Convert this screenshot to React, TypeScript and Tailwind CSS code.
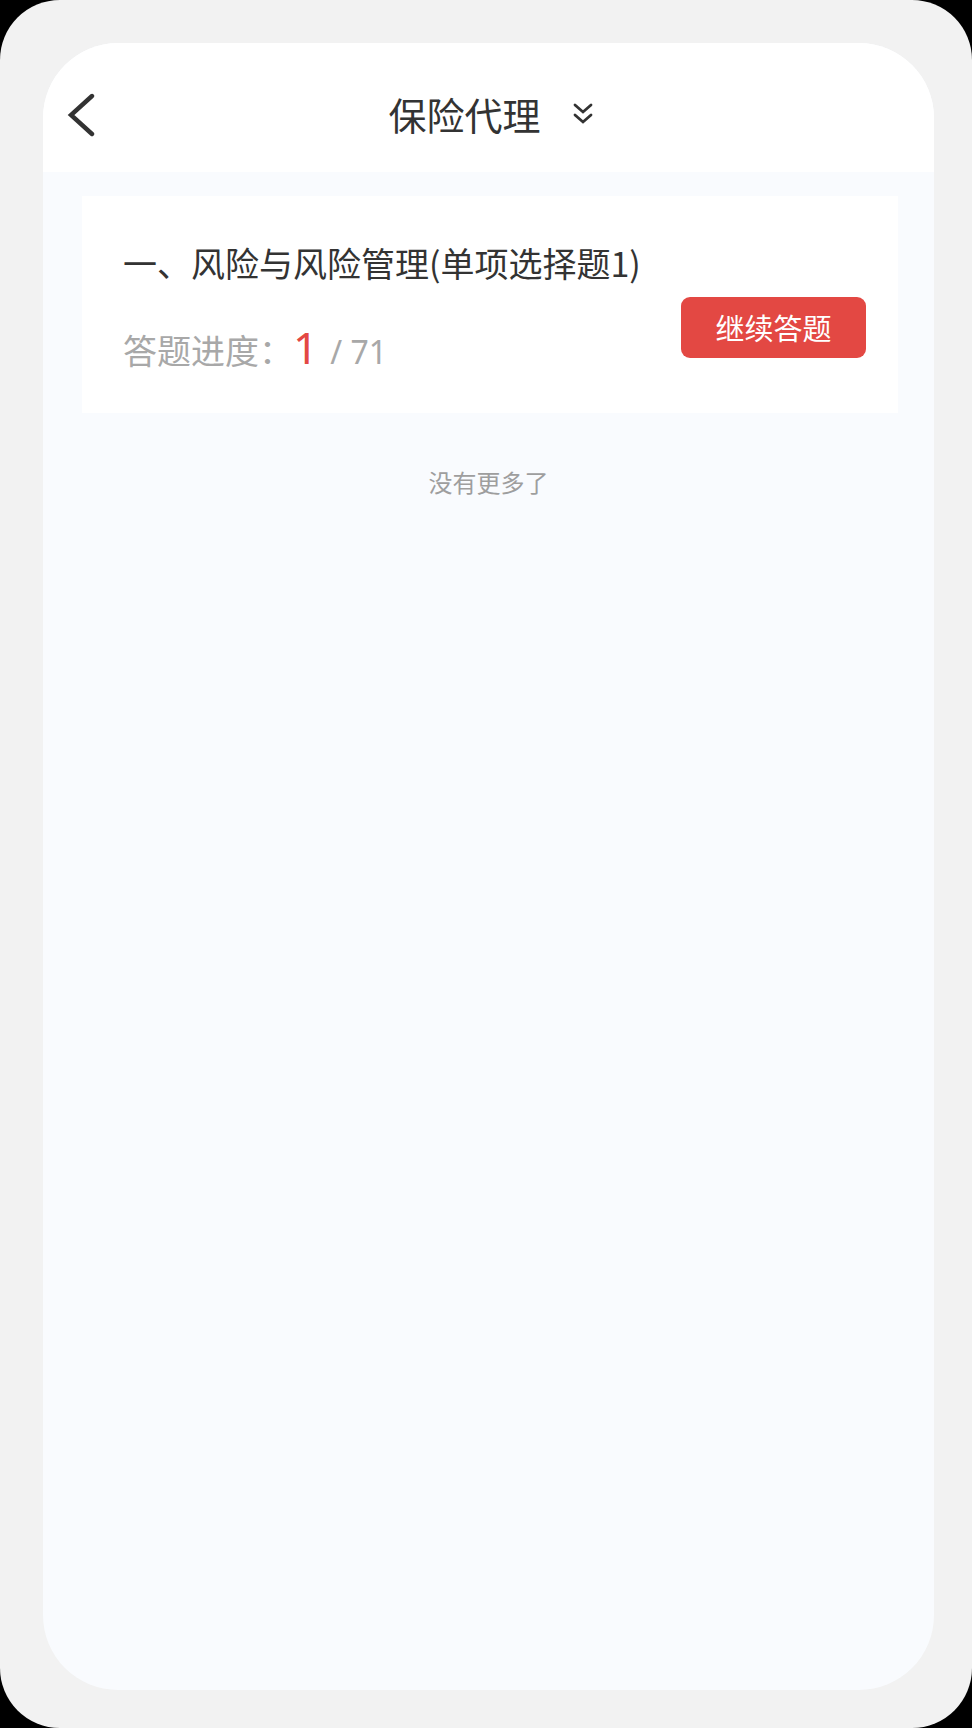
export default function App() {
  return (
    <div className="w-[972px] h-[1728px] bg-black" style={{ fontFamily: '"Noto Sans CJK SC", "Noto Sans", sans-serif' }}>
      <div className="h-full bg-[#f2f2f2] rounded-[60px] pl-[43px] pr-[38px] pt-[43px] pb-[38px]">
        <div className="h-full rounded-[75px] overflow-hidden bg-[#f9fbfe] flex flex-col">
          {/* header */}
          <div className="relative h-[129px] shrink-0 bg-white flex items-center justify-center pt-[12px]">
            <svg className="absolute left-[24px] top-[50px]" width="28" height="44" viewBox="0 0 28 44" fill="none">
              <path d="M25 3 L4 22 L25 41" stroke="#333333" strokeWidth="4.4" strokeLinecap="round" strokeLinejoin="miter" />
            </svg>
            <div className="flex items-center ml-[4px]">
              <span className="text-[38px] leading-[46px] text-[#333333]">保险代理</span>
              <svg className="ml-[32px] mt-[2px]" width="20" height="24" viewBox="0 0 20 24" fill="none">
                <path d="M2 2 L10 9 L18 2 M2 12 L10 19 L18 12" stroke="#333333" strokeWidth="2.8" strokeLinecap="round" strokeLinejoin="miter" />
              </svg>
            </div>
          </div>

          {/* list */}
          <div className="flex-1 flex flex-col">
            <div className="mt-[24px] ml-[39px] mr-[36px] h-[217px] bg-white px-[41px] pt-[47px]">
              <div className="text-[34px] leading-[40px] text-[#333333]">一、风险与风险管理(单项选择题1)</div>
              <div className="flex justify-between items-start">
                <div className="mt-[44px] flex items-baseline text-[34px] leading-[40px] text-[#a8a8a8]">
                  <span>答题进度：</span>
                  <span className="text-[44px] leading-[40px] text-[#e34843]" style={{ fontFamily: '"Noto Sans", sans-serif' }}>1</span>
                  <span className="ml-[12px] text-[32px]" style={{ fontFamily: '"Noto Sans", sans-serif' }}>/ 71</span>
                </div>
                <button className="mt-[14px] mr-[-9px] w-[185px] h-[61px] rounded-[9px] bg-[#e34843] text-white text-[29px] leading-[61px] text-center">
                  继续答题
                </button>
              </div>
            </div>
            <div className="mt-[53px] text-center text-[24px] leading-[32px] text-[#9e9e9e]">没有更多了</div>
          </div>
        </div>
      </div>
    </div>
  );
}
